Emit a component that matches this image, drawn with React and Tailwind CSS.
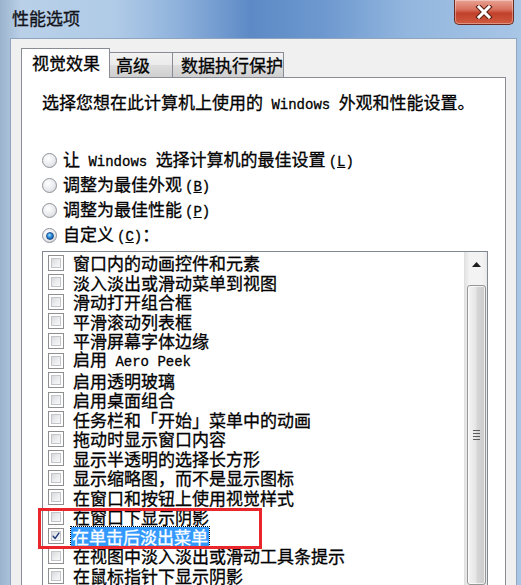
const cjk = "font-['Noto_Sans_CJK_SC','Liberation_Sans',sans-serif] [-webkit-text-stroke:0.3px_#000]"
const mono = "font-['Liberation_Mono','Noto_Sans_CJK_SC',monospace] text-[14px]"

const items = [
  { label: '窗口内的动画控件和元素' },
  { label: '淡入淡出或滑动菜单到视图' },
  { label: '滑动打开组合框' },
  { label: '平滑滚动列表框' },
  { label: '平滑屏幕字体边缘' },
  { label: '启用', latin: ' Aero Peek' },
  { label: '启用透明玻璃' },
  { label: '启用桌面组合' },
  { label: '任务栏和「开始」菜单中的动画' },
  { label: '拖动时显示窗口内容' },
  { label: '显示半透明的选择长方形' },
  { label: '显示缩略图，而不是显示图标' },
  { label: '在窗口和按钮上使用视觉样式' },
  { label: '在窗口下显示阴影' },
  { label: '在单击后淡出菜单', checked: true, selected: true },
  { label: '在视图中淡入淡出或滑动工具条提示' },
  { label: '在鼠标指针下显示阴影' },
]

const radios = [
  { pre: '让', latin: ' Windows ', post: '选择计算机的最佳设置', key: 'L' },
  { pre: '调整为最佳外观', key: 'B' },
  { pre: '调整为最佳性能', key: 'P' },
  { pre: '自定义', key: 'C', colon: true, on: true },
]

function Radio({ on }) {
  return (
    <div className="w-[15px] h-[15px] rounded-full border border-[#8e9297] bg-[radial-gradient(circle_at_40%_35%,#ffffff_0%,#e8eaed_55%,#c9ccd1_100%)] flex items-center justify-center shrink-0">
      {on && (
        <div className="w-[8px] h-[8px] rounded-full bg-[radial-gradient(circle_at_40%_35%,#9fe0ff_0%,#2a8ad8_45%,#0b3f8a_100%)] border border-[#1d4f8c]" />
      )}
    </div>
  )
}

function Checkbox({ checked }) {
  return (
    <div className="w-[16px] h-[16px] border border-[#8f8f8f] bg-white p-[2px] shrink-0">
      <div className="w-full h-full border border-[#c2c5c9] bg-[linear-gradient(135deg,#d7d9dc_0%,#eeeff0_60%,#f7f7f7_100%)] flex items-center justify-center">
        {checked && (
          <svg width="10" height="10" viewBox="0 0 10 10">
            <path d="M1.5 5.2 L4 8 L8.6 1.4" fill="none" stroke="#1f3a7a" strokeWidth="1.8" strokeLinecap="round" strokeLinejoin="round" />
          </svg>
        )}
      </div>
    </div>
  )
}

export default function App() {
  return (
    <div className={`relative w-[521px] h-[585px] overflow-hidden flex flex-col bg-[linear-gradient(90deg,#9bb3cc_0%,#b9d0e8_4%,#b0cbe7_22%,#8fb2dc_34%,#5d8ac6_48%,#6d98cf_62%,#92b6de_78%,#a8c6e6_100%)] ${cjk}`}>
      {/* title bar */}
      <div className="h-[38px] flex items-start justify-between shrink-0">
        <div className="pl-[12px] pt-[6px] text-[17px] leading-[24px] text-[#1b1b28]">性能选项</div>
        <div className="mr-[7px] w-[60px] h-[25px] rounded-b-[5px] border border-t-0 border-[#6e2a21] bg-[linear-gradient(180deg,#e9a293_0%,#d7705d_40%,#c1402a_55%,#cf5b3f_100%)] flex items-center justify-center shadow-[inset_0_0_0_1px_rgba(255,255,255,0.35)]">
          <svg width="18" height="14" viewBox="0 0 18 14">
            <path d="M4 2 L14 12 M14 2 L4 12" stroke="#5a1e16" strokeWidth="5" strokeLinecap="square" />
            <path d="M4 2 L14 12 M14 2 L4 12" stroke="#ffffff" strokeWidth="3" strokeLinecap="square" />
          </svg>
        </div>
      </div>

      {/* dialog body */}
      <div className="flex-1 min-h-0 ml-[10px] mr-[4px] bg-[#f0f0f0] border-t border-l border-r border-[#8ea5bd] pt-[9px] pl-[10px] pr-[10px] flex flex-col">
        {/* tabs */}
        <div className="flex items-end h-[29px] shrink-0 text-[17px] text-black">
          <div className="relative z-10 w-[89px] h-[30px] -mb-px bg-white border border-b-0 border-[#898c95] pl-[10px] pt-[2px] leading-[24px]">视觉效果</div>
          <div className="w-[64px] h-[25px] -ml-px border border-b-0 border-[#898c95] bg-[linear-gradient(180deg,#f2f2f2_0%,#ebebeb_50%,#dddddd_51%,#cfcfcf_100%)] pl-[6px] leading-[24px]">高级</div>
          <div className="w-[112px] h-[25px] -ml-px border border-b-0 border-[#898c95] bg-[linear-gradient(180deg,#f2f2f2_0%,#ebebeb_50%,#dddddd_51%,#cfcfcf_100%)] pl-[8px] leading-[24px]">数据执行保护</div>
        </div>

        {/* tab panel */}
        <div className="flex-1 min-h-0 bg-white border border-b-0 border-[#898c95] pt-[14px] pl-[20px] flex flex-col text-[17px] text-black">
          <div className="leading-[20px] whitespace-nowrap">
            选择您想在此计算机上使用的<span className={mono}> Windows </span>外观和性能设置。
          </div>

          <div className="mt-[33px] flex flex-col">
            {radios.map((r) => (
              <div key={r.key} className="h-[25px] flex items-center gap-[6px] whitespace-nowrap">
                <Radio on={r.on} />
                <span className="leading-[20px]">
                  {r.pre}
                  {r.latin && <span className={mono}>{r.latin}</span>}
                  {r.post}
                  <span className={`${mono} ml-[3px]`}>
                    (<span className="underline">{r.key}</span>)
                  </span>
                  {r.colon && '：'}
                </span>
              </div>
            ))}
          </div>

          {/* list box */}
          <div className="mt-[3px] w-[446px] flex-1 min-h-0 border border-b-0 border-[#828790] flex overflow-hidden">
            <div className="flex-1 pt-[1px] pl-[5px]">
              {items.map((it, i) => (
                <div key={i} className="h-[19.55px] flex items-center gap-[9px] whitespace-nowrap">
                  <Checkbox checked={it.checked} />
                  {it.selected ? (
                    <span className="leading-[19px] bg-[#3399ff] text-white [-webkit-text-stroke:0.3px_#fff] px-[1px] outline outline-1 outline-dotted outline-[#000] -ml-[2px]">{it.label}</span>
                  ) : (
                    <span className="leading-[19px]">
                      {it.label}
                      {it.latin && <span className={mono}>{it.latin}</span>}
                    </span>
                  )}
                </div>
              ))}
            </div>

            {/* scrollbar */}
            <div className="w-[23px] shrink-0 bg-[linear-gradient(90deg,#e3e3e3_0%,#f3f3f3_20%,#f3f3f3_80%,#e9e9e9_100%)] border-l border-[#e0e0e0] flex flex-col items-center">
              <div className="h-[44px] w-full flex items-start justify-center pt-[10px]">
                <svg width="9" height="5" viewBox="0 0 9 5">
                  <path d="M0 5 L4.5 0 L9 5 Z" fill="#1e1e1e" />
                </svg>
              </div>
              <div className="w-[19px] h-[300px] shrink-0 rounded-[3px] border border-[#979797] bg-[linear-gradient(90deg,#f4f4f4_0%,#e6e6e6_45%,#d6d6d6_55%,#cbcbcb_100%)] flex items-center justify-center shadow-[inset_0_0_0_1px_rgba(255,255,255,0.7)]">
                <div className="flex flex-col gap-[2px]">
                  <div className="w-[7px] h-[1px] bg-[#5a5a5a]" />
                  <div className="w-[7px] h-[1px] bg-[#5a5a5a]" />
                  <div className="w-[7px] h-[1px] bg-[#5a5a5a]" />
                  <div className="w-[7px] h-[1px] bg-[#5a5a5a]" />
                </div>
              </div>
            </div>
          </div>
        </div>
      </div>

      {/* red annotation box */}
      <div className="absolute left-[38px] top-[508px] w-[224px] h-[41px] border-[3px] border-[#e8262b] pointer-events-none" />
    </div>
  )
}
